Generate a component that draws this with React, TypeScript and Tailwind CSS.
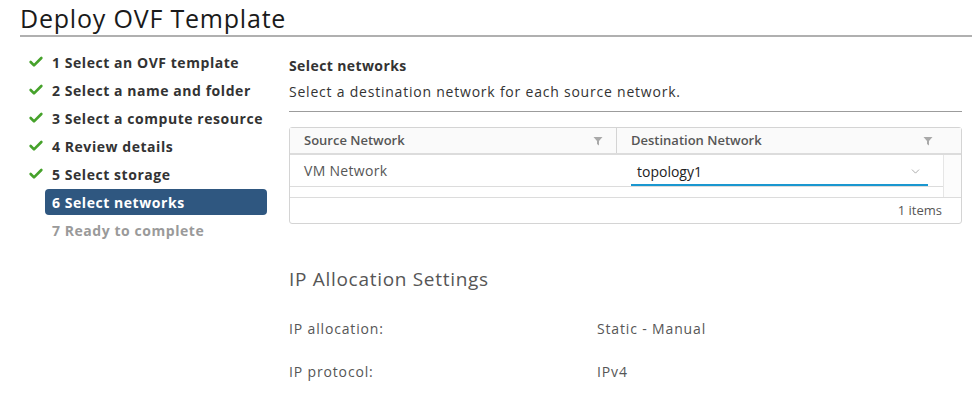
import { Check, ChevronDown } from "lucide-react";

const STEPS = [
  { n: 1, label: "Select an OVF template", state: "done" },
  { n: 2, label: "Select a name and folder", state: "done" },
  { n: 3, label: "Select a compute resource", state: "done" },
  { n: 4, label: "Review details", state: "done" },
  { n: 5, label: "Select storage", state: "done" },
  { n: 6, label: "Select networks", state: "active" },
  { n: 7, label: "Ready to complete", state: "todo" },
];

function FilterIcon() {
  return (
    <svg width="10" height="10" viewBox="0 0 10 10" className="shrink-0">
      <path d="M0.5 1h9L6 5v4.5L4 8V5z" fill="#a9a9a9" />
    </svg>
  );
}

export default function App() {
  return (
    <div className="w-[972px] h-[400px] bg-white overflow-hidden text-[#333] font-['Open_Sans',sans-serif]">
      {/* Title */}
      <div className="ml-5 pt-[2px] h-[37px] border-b-2 border-[#b0b0b0]">
        <h1 className="text-[25px] leading-[32px] tracking-[0.8px] text-[#1a1a1a]">Deploy OVF Template</h1>
      </div>

      <div className="flex">
        {/* Steps */}
        <div className="w-[289px] shrink-0 pt-[11px] pl-[28px]">
          {STEPS.map((s) => (
            <div key={s.n} className="flex items-center h-[28px]">
              <div className="w-[17px] shrink-0">
                {s.state === "done" && (
                  <Check size={16} strokeWidth={4} className="text-[#46a22b]" />
                )}
              </div>
              <div
                className={`flex items-center h-[26px] w-[222px] text-[14px] font-bold tracking-[0.55px] pl-[7px] rounded-[4px] ${
                  s.state === "active"
                    ? "bg-[#2f5780] text-white"
                    : s.state === "todo"
                    ? "text-[#9a9a9a]"
                    : "text-[#333]"
                }`}
              >
                {s.n} {s.label}
              </div>
            </div>
          ))}
        </div>

        {/* Content */}
        <div className="flex-1 pr-[10px]">
          <div className="pt-[18px] text-[14px] font-bold leading-[22px] tracking-[0.4px]">Select networks</div>
          <div className="mt-[4px] text-[14px] leading-[22px] tracking-[0.78px] pb-[8px] border-b border-[#9c9c9c]">
            Select a destination network for each source network.
          </div>

          {/* Table */}
          <div className="mt-[15px] border border-[#d4d4d4] rounded-[3px] text-[13px]">
            <div className="flex h-[27px] bg-[#fafafa] border-b-2 border-[#dcdcdc] font-semibold text-[#565656]">
              <div className="flex items-center justify-between w-[327px] pl-[14px] pr-[13px] border-r border-[#d4d4d4]">
                <span>Source Network</span>
                <FilterIcon />
              </div>
              <div className="flex items-center justify-between flex-1 pl-[14px] pr-[28px]">
                <span>Destination Network</span>
                <FilterIcon />
              </div>
            </div>
            <div className="flex h-[42px]">
              <div className="flex-1">
                <div className="flex h-[32px] border-b border-[#dcdcdc]">
                  <div className="w-[327px] pl-[14px] flex items-center text-[14px] tracking-[0.3px] text-[#565656]">VM Network</div>
                  <div className="flex-1 pl-[14px] pr-[15px] flex items-end">
                    <div className="flex items-center justify-between w-full h-[28px] border-b-2 border-[#1a97d0] pl-[6px] pr-[6px] text-[14px] text-[#222]">
                      <span>topology1</span>
                      <ChevronDown size={13} strokeWidth={1.3} className="text-[#8a8a8a]" />
                    </div>
                  </div>
                </div>
              </div>
              <div className="w-[18px] border-l border-[#e6e6e6] bg-[#fcfcfc]" />
            </div>
            <div className="flex items-center justify-end h-[26px] border-t border-[#dcdcdc] pr-[19px] text-[13px] text-[#565656]">
              1 items
            </div>
          </div>

          {/* IP allocation */}
          <div className="mt-[42px] text-[19px] leading-[26px] tracking-[0.7px] text-[#565656]">IP Allocation Settings</div>
          <div className="mt-[26px] flex text-[14px] text-[#565656] leading-[22px] tracking-[0.85px]">
            <div className="w-[308px]">IP allocation:</div>
            <div>Static - Manual</div>
          </div>
          <div className="mt-[21px] flex text-[14px] text-[#565656] leading-[22px] tracking-[0.85px]">
            <div className="w-[308px]">IP protocol:</div>
            <div>IPv4</div>
          </div>
        </div>
      </div>
    </div>
  );
}
